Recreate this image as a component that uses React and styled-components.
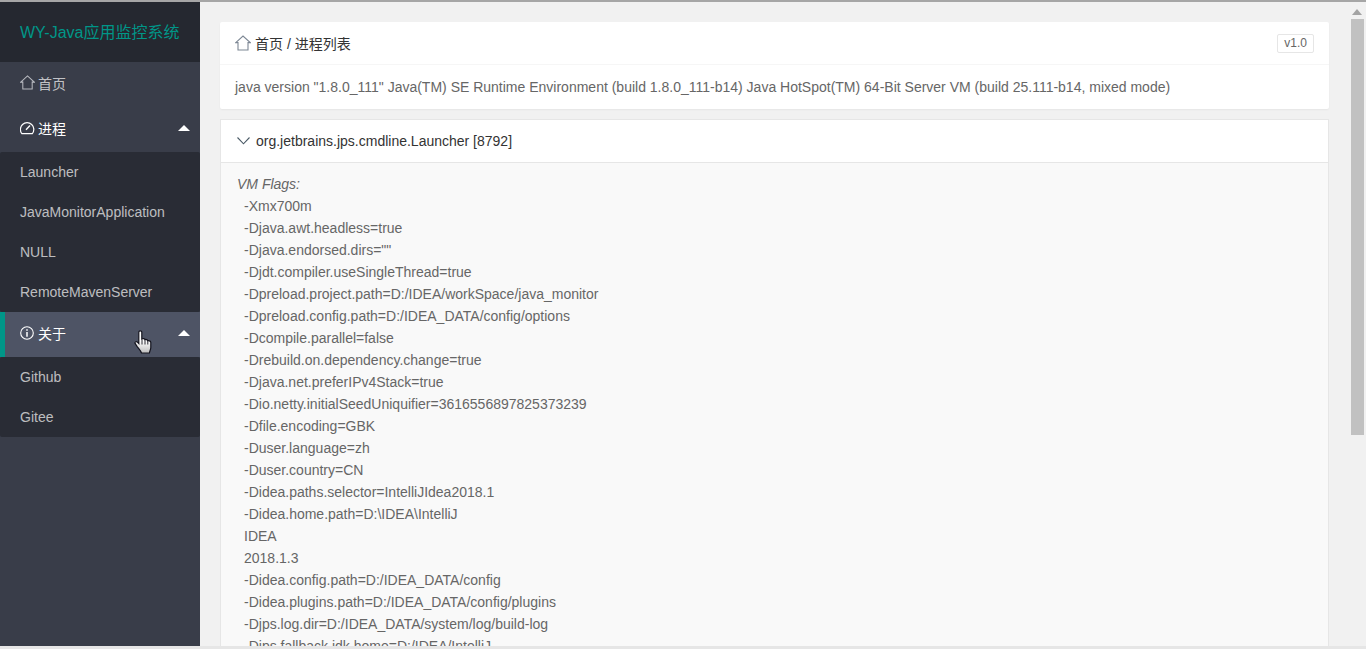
import styled, { createGlobalStyle } from "styled-components";

const GlobalStyle = createGlobalStyle`
  html, body {
    margin: 0;
    height: 100%;
    overflow: hidden;
    background: #f1f1f1;
  }
  body {
    font-family: "Liberation Sans", "Noto Sans CJK SC", sans-serif;
    font-size: 14px;
    color: #666;
  }
`;

const Page = styled.div`
  height: 649px;
  display: flex;
  flex-direction: column;
  overflow: hidden;
`;

const TopLine = styled.div`
  height: 2px;
  flex: none;
  background: #a6a6a6;
`;

const BottomLine = styled.div`
  height: 3px;
  flex: none;
  background: #e6e6e6;
`;

const Body = styled.div`
  flex: 1;
  min-height: 0;
  display: flex;
`;

// Sidebar

const Sidebar = styled.aside`
  width: 200px;
  flex: none;
  background: #393d49;
`;

const Logo = styled.div`
  height: 60px;
  box-sizing: border-box;
  padding: 0 0 2px 20px;
  display: flex;
  align-items: center;
  background: #252830;
  color: #009688;
  font-size: 16px;
`;

const NavItem = styled.div`
  height: 45px;
  box-sizing: border-box;
  padding: 0 10px 4px ${(props) => (props.$active ? "15px" : "20px")};
  display: flex;
  align-items: center;
  gap: 3px;
  color: ${(props) => (props.$open ? "#fff" : "rgba(255, 255, 255, 0.7)")};
  background: ${(props) => (props.$active ? "#4e5465" : "transparent")};
  border-left: ${(props) => (props.$active ? "5px solid #009688" : "none")};
  position: relative;
`;

const Caret = styled.span`
  margin-left: auto;
  width: 0;
  height: 0;
  border-left: 6px solid transparent;
  border-right: 6px solid transparent;
  border-bottom: 6px solid #fff;
`;

const SubMenu = styled.div`
  background: #292c35;
  border-radius: 2px;
`;

const SubItem = styled.div`
  height: 40px;
  padding-left: 20px;
  display: flex;
  align-items: center;
  color: rgba(255, 255, 255, 0.7);
`;

const HandCursor = styled.svg`
  position: absolute;
  left: 129px;
  top: 18px;
`;

// Content

const Content = styled.main`
  flex: 1;
  min-width: 0;
  padding: 20px 16px 0 20px;
  overflow: hidden;
`;

const Card = styled.section`
  background: #fff;
  border-radius: 2px;
  box-shadow: 0 1px 2px rgba(0, 0, 0, 0.05);
  margin-bottom: 10px;
`;

const CardHeader = styled.div`
  height: 42px;
  padding: 0 15px;
  display: flex;
  align-items: center;
  gap: 4px;
  color: #333;
  border-bottom: 1px solid #f6f6f6;
`;

const Badge = styled.span`
  margin-left: auto;
  height: 17px;
  line-height: 17px;
  padding: 0 6px;
  border: 1px solid #e6e6e6;
  border-radius: 2px;
  font-size: 12px;
  color: #666;
`;

const CardBody = styled.div`
  height: 44px;
  padding: 0 15px;
  display: flex;
  align-items: center;
`;

const Collapse = styled.section`
  border: 1px solid #e6e6e6;
  background: #fff;
`;

const CollapseTitle = styled.div`
  height: 42px;
  padding-left: 15px;
  display: flex;
  align-items: center;
  gap: 5px;
  color: #333;
  border-bottom: 1px solid #e6e6e6;
`;

const CollapseBody = styled.div`
  background: #f9f9f9;
  padding: 10px 16px;
  line-height: 22px;
  color: #666;
`;

const FlagsTitle = styled.div`
  font-style: italic;
`;

const FlagLine = styled.div`
  padding-left: 7px;
`;

// Page scrollbar

const Rail = styled.div`
  width: 21px;
  flex: none;
  padding-left: 6px;
  box-sizing: border-box;
`;

const RailArrow = styled.div`
  width: 0;
  height: 0;
  margin: 7px 0 4px 1px;
  border-left: 5.5px solid transparent;
  border-right: 5.5px solid transparent;
  border-bottom: 6px solid #a3a3a3;
`;

const RailThumb = styled.div`
  width: 13px;
  height: 416px;
  background: #c1c1c1;
`;

const HomeIcon = ({ color, size }) => (
  <svg width={size} height={size} viewBox="0 0 16 16" fill="none" stroke={color} strokeWidth="1.1">
    <path d="M0.8 7.6 L8 1 L15.2 7.6 H13 V15 H3 V7.6 Z" />
  </svg>
);

const GaugeIcon = () => (
  <svg width="15" height="14" viewBox="0 0 15 14" fill="none" stroke="#fff" strokeWidth="1.2">
    <path d="M1.9 12.6 A6.7 6.7 0 1 1 12.3 12.6 Z" />
    <path d="M6 8.8 L10 4.6" strokeWidth="1.4" />
  </svg>
);

const InfoIcon = () => (
  <svg width="15" height="14" viewBox="0 0 15 14" fill="none" stroke="#fff" strokeWidth="1.1">
    <circle cx="7" cy="7" r="6.3" />
    <path d="M7 3.2 V4.8 M7 6 V10.8" strokeWidth="1.5" />
  </svg>
);

const ChevronIcon = () => (
  <svg width="15" height="10" viewBox="0 0 15 10" fill="none" stroke="#4a5a66" strokeWidth="1.1">
    <path d="M1.5 1.5 L7.5 7.8 L13.5 1.5" />
  </svg>
);

const Hand = () => (
  <HandCursor width="19" height="24" viewBox="0 0 19 24">
    <defs>
      <linearGradient id="handFill" x1="0" y1="0" x2="0" y2="1">
        <stop offset="0.45" stopColor="#fff" />
        <stop offset="1" stopColor="#bdbdbd" />
      </linearGradient>
    </defs>
    <path
      d="M5 1.5 C5.6 0.5 7.4 0.5 7.8 2 V9 C9 8.4 10.6 8.6 10.9 9.6 C11.9 9.2 13.4 9.6 13.7 10.7 C14.8 10.3 16.6 11 16.8 12.4 V17.5 C16.8 19.5 15.8 20.8 15.4 23 H7.5 C7 21 5 19 3.2 16.6 L1.1 13.4 C0.6 12.2 2 11 3.2 11.9 L4.8 13.6 V2.5 Z"
      fill="url(#handFill)"
      stroke="#14141e"
      strokeWidth="1.2"
    />
    <path d="M8 9.5 V14.5 M11 9.9 V14.5 M13.8 11 V14.5" stroke="#14141e" strokeWidth="0.9" fill="none" />
  </HandCursor>
);

const flags = [
  "-Xmx700m",
  "-Djava.awt.headless=true",
  '-Djava.endorsed.dirs=""',
  "-Djdt.compiler.useSingleThread=true",
  "-Dpreload.project.path=D:/IDEA/workSpace/java_monitor",
  "-Dpreload.config.path=D:/IDEA_DATA/config/options",
  "-Dcompile.parallel=false",
  "-Drebuild.on.dependency.change=true",
  "-Djava.net.preferIPv4Stack=true",
  "-Dio.netty.initialSeedUniquifier=3616556897825373239",
  "-Dfile.encoding=GBK",
  "-Duser.language=zh",
  "-Duser.country=CN",
  "-Didea.paths.selector=IntelliJIdea2018.1",
  "-Didea.home.path=D:\\IDEA\\IntelliJ",
  "IDEA",
  "2018.1.3",
  "-Didea.config.path=D:/IDEA_DATA/config",
  "-Didea.plugins.path=D:/IDEA_DATA/config/plugins",
  "-Djps.log.dir=D:/IDEA_DATA/system/log/build-log",
  "-Djps.fallback.jdk.home=D:/IDEA/IntelliJ",
];

export default function App() {
  return (
    <Page>
      <GlobalStyle />
      <TopLine />
      <Body>
        <Sidebar>
          <Logo>WY-Java应用监控系统</Logo>
          <NavItem>
            <HomeIcon color="#b8bac0" size={15} />
            首页
          </NavItem>
          <NavItem $open>
            <GaugeIcon />
            进程
            <Caret />
          </NavItem>
          <SubMenu>
            <SubItem>Launcher</SubItem>
            <SubItem>JavaMonitorApplication</SubItem>
            <SubItem>NULL</SubItem>
            <SubItem>RemoteMavenServer</SubItem>
          </SubMenu>
          <NavItem $open $active>
            <InfoIcon />
            关于
            <Caret />
            <Hand />
          </NavItem>
          <SubMenu>
            <SubItem>Github</SubItem>
            <SubItem>Gitee</SubItem>
          </SubMenu>
        </Sidebar>
        <Content>
          <Card>
            <CardHeader>
              <HomeIcon color="#7d8794" size={16} />
              首页 / 进程列表
              <Badge>v1.0</Badge>
            </CardHeader>
            <CardBody>
              java version "1.8.0_111" Java(TM) SE Runtime Environment (build 1.8.0_111-b14) Java HotSpot(TM) 64-Bit Server VM (build 25.111-b14, mixed mode)
            </CardBody>
          </Card>
          <Collapse>
            <CollapseTitle>
              <ChevronIcon />
              org.jetbrains.jps.cmdline.Launcher [8792]
            </CollapseTitle>
            <CollapseBody>
              <FlagsTitle>VM Flags:</FlagsTitle>
              {flags.map((flag) => (
                <FlagLine key={flag}>{flag}</FlagLine>
              ))}
            </CollapseBody>
          </Collapse>
        </Content>
        <Rail>
          <RailArrow />
          <RailThumb />
        </Rail>
      </Body>
      <BottomLine />
    </Page>
  );
}
